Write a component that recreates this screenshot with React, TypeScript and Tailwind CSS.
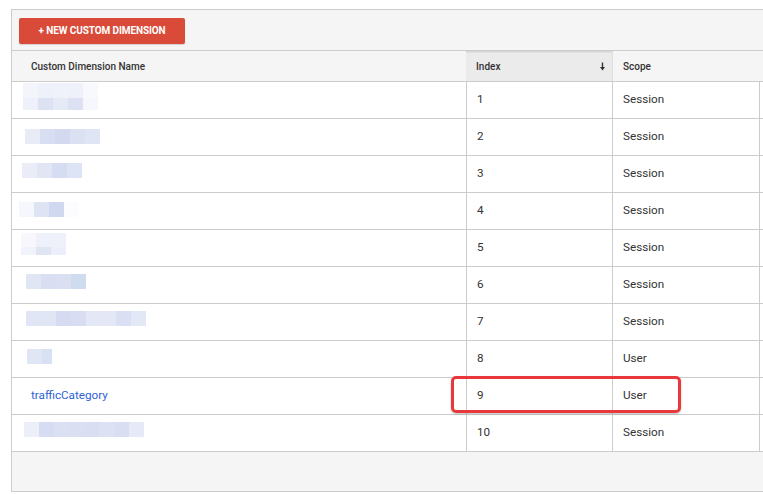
import React from "react";

type Blur = { top: number; left: number; rows: { h: number; colors: string[]; w?: number[] }[] };

interface Row {
  index: number;
  scope: string;
  name?: string;
  blur?: Blur;
}

const rows: Row[] = [
  {
    index: 1,
    scope: "Session",
    blur: {
      top: 1,
      left: 11,
      rows: [
        { h: 15, colors: ["#f3f5fb", "#eef1fa", "#f0f2fb", "#eef1fa", "#f8f9fd"] },
        { h: 12, colors: ["#eef1fa", "#dde2f3", "#e6e9f6", "#dce1f3", "#f5f7fc"] },
      ],
    },
  },
  {
    index: 2,
    scope: "Session",
    blur: { top: 10, left: 13, rows: [{ h: 15, colors: ["#e9ecf7", "#d9dff3", "#d3daf0", "#dbe0f3", "#dfe5f5"] }] },
  },
  {
    index: 3,
    scope: "Session",
    blur: { top: 7, left: 10, rows: [{ h: 15, colors: ["#eaedf8", "#e2e5f4", "#d6dcf2", "#dde4f5"] }] },
  },
  {
    index: 4,
    scope: "Session",
    blur: { top: 9, left: 7, rows: [{ h: 15, colors: ["#f6f7fc", "#dfe4f4", "#d0d8f0", "#fcfcfe"] }] },
  },
  {
    index: 5,
    scope: "Session",
    blur: {
      top: 3,
      left: 9,
      rows: [
        { h: 14, colors: ["#f8f7fc", "#eff1fa", "#eff1fa"] },
        { h: 8, colors: ["#f0f3fb", "#e0e5f4", "#eceff9"] },
      ],
    },
  },
  {
    index: 6,
    scope: "Session",
    blur: { top: 7, left: 14, rows: [{ h: 15, colors: ["#e1e6f5", "#d9def2", "#dadff2", "#cfdcf0"] }] },
  },
  {
    index: 7,
    scope: "Session",
    blur: {
      top: 7,
      left: 14,
      rows: [
        { h: 15, colors: ["#e2e5f5", "#e1e6f4", "#d6dbf2", "#d8ddf2", "#e4e8f6", "#e4e8f6", "#dadff4", "#e3e8f7"] },
      ],
    },
  },
  {
    index: 8,
    scope: "User",
    blur: { top: 8, left: 15, rows: [{ h: 15, colors: ["#e1e6f5", "#d8e0f4"], w: [15, 10] }] },
  },
  { index: 9, scope: "User", name: "trafficCategory" },
  {
    index: 10,
    scope: "Session",
    blur: {
      top: 7,
      left: 12,
      rows: [
        { h: 15, colors: ["#eceff8", "#d6dcf1", "#dbe0f3", "#dadff2", "#d9def3", "#dce1f3", "#d9def2", "#e6e9f7"] },
      ],
    },
  },
];

function BlurBlock({ blur }: { blur: Blur }) {
  return (
    <div className="flex flex-col" style={{ marginTop: blur.top, marginLeft: blur.left }}>
      {blur.rows.map((r, i) => (
        <div key={i} className="flex">
          {r.colors.map((c, j) => (
            <div key={j} style={{ background: c, height: r.h, width: r.w ? r.w[j] : 15 }} />
          ))}
        </div>
      ))}
    </div>
  );
}

function SortArrow() {
  return (
    <svg width="7" height="9" viewBox="0 0 7 9" className="text-[#333]">
      <path d="M3.5 0.5V7" stroke="currentColor" strokeWidth="1.4" />
      <path d="M1 5L3.5 8.5L6 5Z" fill="currentColor" />
    </svg>
  );
}

export default function App() {
  return (
    <div className="relative w-[763px] h-[494px] overflow-hidden bg-white font-['Roboto','Liberation_Sans',sans-serif]">
      <div className="ml-[11px] mt-[9px] w-[800px] border-l border-t border-b border-[#cccccc] bg-[#f5f5f5]">
        {/* Toolbar */}
        <div className="h-[41px] pt-[7px] pl-[7px] border-b border-[#cccccc]">
          <button className="h-[26px] w-[166px] rounded-[2px] bg-[#d94a38] text-white text-[10px] font-bold tracking-[-0.1px] shadow-[0_1px_1px_rgba(0,0,0,0.15)]">
            + NEW CUSTOM DIMENSION
          </button>
        </div>

        {/* Header */}
        <div className="grid grid-cols-[454px_146px_147px_1fr] h-[31px] border-b border-[#cccccc] text-[10px] font-medium text-[#333]">
          <div className="flex items-center pl-[19px]">Custom Dimension Name</div>
          <div className="flex items-center justify-between pl-[10px] pr-[6px] bg-[#ebebeb] shadow-[inset_0_2px_2px_-1px_rgba(0,0,0,0.12)]">
            <span>Index</span>
            <SortArrow />
          </div>
          <div className="flex items-center pl-[10px] border-l border-[#e0e0e0]">Scope</div>
          <div />
        </div>

        {/* Body */}
        <div className="bg-white">
          {rows.map((row) => (
            <div
              key={row.index}
              className="grid grid-cols-[454px_146px_147px_1fr] h-[37px] border-b border-[#cccccc] text-[11.7px] text-[#333]"
            >
              <div className="flex items-start">
                {row.blur ? (
                  <BlurBlock blur={row.blur} />
                ) : (
                  <a className="self-center pl-[19px] text-[#2f62d6] cursor-pointer">{row.name}</a>
                )}
              </div>
              <div className="flex items-center pl-[10px] border-l border-[#cccccc]">{row.index}</div>
              <div className="flex items-center pl-[10px] border-l border-[#cccccc]">{row.scope}</div>
              <div className="border-l border-[#cccccc]" />
            </div>
          ))}
        </div>

        {/* Footer */}
        <div className="h-[39px] bg-[#f5f5f5]" />
      </div>

      {/* Highlight */}
      <div className="absolute left-[451px] top-[376px] w-[230px] h-[37px] rounded-[5px] border-[3px] border-[#e8383c] shadow-[0_1px_2px_rgba(0,0,0,0.25)]" />
    </div>
  );
}
